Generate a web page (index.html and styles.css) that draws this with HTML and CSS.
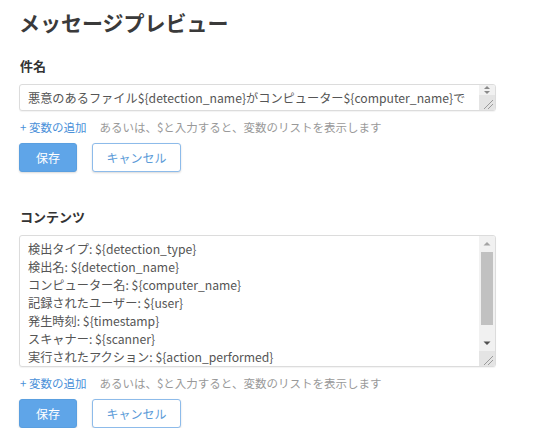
FILE: index.html
```html
<!DOCTYPE html>
<html lang="ja">
<head>
<meta charset="utf-8">
<title>メッセージプレビュー</title>
<link rel="stylesheet" href="styles.css">
</head>
<body>
<div class="page">
  <h1 class="title">メッセージプレビュー</h1>

  <section class="field field-subject">
    <div class="label">件名</div>
    <div class="textbox textbox-subject">
      <div class="textbox-text">悪意のあるファイル${detection_name}がコンピューター${computer_name}で検出されました</div>
      <div class="scrollbar">
        <div class="sb-mini">
          <svg width="16" height="10" viewBox="0 0 16 10"><path d="M5 4 L8 1 L11 4 Z" fill="#8a8a8a"/><path d="M5 6 L8 9 L11 6 Z" fill="#8a8a8a"/></svg>
        </div>
        <div class="sb-corner">
          <svg width="16" height="15" viewBox="0 0 16 15"><path d="M5 14 L14 5 M9 14 L14 9" stroke="#9a9a9a" stroke-width="1"/></svg>
        </div>
      </div>
    </div>
    <div class="hint-row">
      <a class="add-var" href="#">+ 変数の追加</a>
      <span class="hint">あるいは、$と入力すると、変数のリストを表示します</span>
    </div>
    <div class="actions">
      <button class="btn btn-primary">保存</button>
      <button class="btn btn-secondary">キャンセル</button>
    </div>
  </section>

  <section class="field field-content">
    <div class="label">コンテンツ</div>
    <div class="textbox textbox-content">
      <div class="textbox-text">
        <div class="line">検出タイプ: ${detection_type}</div>
        <div class="line">検出名: ${detection_name}</div>
        <div class="line">コンピューター名: ${computer_name}</div>
        <div class="line">記録されたユーザー: ${user}</div>
        <div class="line">発生時刻: ${timestamp}</div>
        <div class="line">スキャナー: ${scanner}</div>
        <div class="line">実行されたアクション: ${action_performed}</div>
        <div class="line">ファイルパス: ${file_path}</div>
      </div>
      <div class="scrollbar">
        <div class="sb-btn">
          <svg width="16" height="15" viewBox="0 0 16 15"><path d="M4.5 9.5 L8 6 L11.5 9.5 Z" fill="#a3a3a3"/></svg>
        </div>
        <div class="sb-track"><div class="sb-thumb"></div></div>
        <div class="sb-btn">
          <svg width="16" height="15" viewBox="0 0 16 15"><path d="M4.5 5.5 L8 9 L11.5 5.5 Z" fill="#505050"/></svg>
        </div>
        <div class="sb-corner">
          <svg width="16" height="15" viewBox="0 0 16 15"><path d="M5 14 L14 5 M9 14 L14 9" stroke="#9a9a9a" stroke-width="1"/></svg>
        </div>
      </div>
    </div>
    <div class="hint-row">
      <a class="add-var" href="#">+ 変数の追加</a>
      <span class="hint">あるいは、$と入力すると、変数のリストを表示します</span>
    </div>
    <div class="actions">
      <button class="btn btn-primary">保存</button>
      <button class="btn btn-secondary">キャンセル</button>
    </div>
  </section>
</div>
</body>
</html>
```

FILE: styles.css
```css
html, body {
  margin: 0;
  padding: 0;
  background: #ffffff;
}

body {
  font-family: "Noto Sans CJK JP", "Open Sans", sans-serif;
  color: #333333;
}

.page {
  padding: 7px 0 0 19px;
  width: 477px;
}

.title {
  margin: 0;
  font-size: 21px;
  line-height: 30px;
  font-weight: 700;
  color: #3a3a3a;
}

.field-subject {
  margin-top: 20px;
}

.field-content {
  margin-top: 36px;
}

.label {
  font-size: 13px;
  line-height: 18px;
  font-weight: 700;
  color: #333333;
  padding-left: 1px;
  margin-bottom: 9px;
}

.textbox {
  display: flex;
  box-sizing: border-box;
  width: 477px;
  border: 1px solid #dcdcdc;
  border-radius: 3px;
  background: #ffffff;
  box-shadow: 0 1px 1px rgba(0, 0, 0, 0.05);
  overflow: hidden;
}

.textbox-subject {
  height: 27px;
}

.textbox-content {
  height: 132px;
}

.textbox-text {
  flex: 1;
  min-width: 0;
  padding: 4px 8px;
  overflow: hidden;
  font-size: 12.2px;
  line-height: 18px;
  color: #555555;
}

.scrollbar {
  width: 16px;
  flex: none;
  display: flex;
  flex-direction: column;
  background: #f1f1f1;
}

.sb-mini {
  height: 10px;
  flex: none;
}

.sb-btn {
  height: 15px;
  flex: none;
}

.sb-track {
  flex: 1;
  padding: 1px 2px 0 2px;
}

.sb-thumb {
  height: 73px;
  background: #c1c1c1;
}

.sb-corner {
  height: 15px;
  flex: none;
  margin-top: auto;
  background: #e4e4e4;
}

.scrollbar svg {
  display: block;
}

.hint-row {
  display: flex;
  align-items: center;
  gap: 13px;
  margin-top: 7px;
  height: 18px;
  font-size: 11.5px;
  line-height: 18px;
  padding-left: 1px;
}

.add-var {
  color: #4a90d9;
  text-decoration: none;
}

.hint {
  color: #999999;
}

.actions {
  display: flex;
  gap: 15px;
  margin-top: 7px;
}

.btn {
  box-sizing: border-box;
  height: 29px;
  margin: 0;
  border-radius: 3px;
  font-family: "Noto Sans CJK JP", "Open Sans", sans-serif;
  font-size: 12px;
  line-height: 1;
  cursor: pointer;
  box-shadow: 0 1px 2px rgba(0, 0, 0, 0.15);
}

.btn-primary {
  width: 58px;
  background: #5fa5e8;
  border: 1px solid #5a9fe0;
  color: #ffffff;
}

.btn-secondary {
  width: 89px;
  background: #ffffff;
  border: 1px solid #8dbbea;
  color: #5b9bd8;
}
```
